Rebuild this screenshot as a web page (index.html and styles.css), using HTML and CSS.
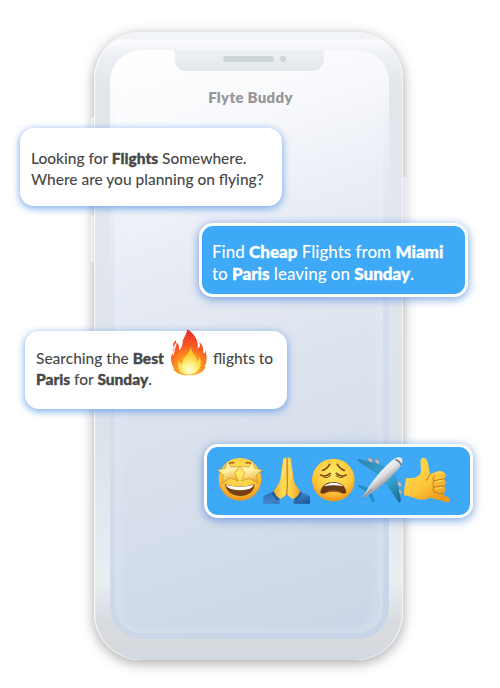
FILE: index.html
```html
<!DOCTYPE html>
<html lang="en">
<head>
<meta charset="utf-8">
<title>Flyte Buddy</title>
<link rel="stylesheet" href="styles.css">
</head>
<body>
<main class="stage">
  <div class="phone">
    <i class="key key-mute"></i><i class="key key-volume"></i><i class="key key-power"></i>
    <div class="screen">
      <div class="inset"></div>
      <svg class="notch" viewBox="0 0 157 21"><defs><linearGradient id="ng" x2="0" y2="1"><stop stop-color="#eef1f4"/><stop offset="1" stop-color="#e2e7eb"/></linearGradient></defs><path fill="url(#ng)" d="M0 0H157Q153 0 153 5V7C153 15 149 21 140 21H15C7 21 4 15 4 7V5Q4 0 0 0Z"/><rect x="52" y="6" width="51" height="6" rx="3" fill="#cfd6da"/><circle cx="112" cy="9" r="3" fill="#cfd6da"/></svg>
      <h1 class="title">Flyte Buddy</h1>
    </div>
  </div>
  <section class="chat">
    <div class="bubble received first">
      <p class="l1">Looking for <b>Flights</b> Somewhere.</p>
      <p class="l2">Where are you planning on flying?</p>
    </div>
    <div class="bubble sent second">
      <p class="l3">Find <b>Cheap</b> Flights from <b>Miami</b></p>
      <p class="l4">to <b>Paris</b> leaving on <b>Sunday</b>.</p>
    </div>
    <div class="bubble received third">
      <p class="l5"><span>Searching the <b>Best</b></span>
        <svg class="fire" viewBox="80 22 114 146"><defs><radialGradient id="fg" gradientUnits="userSpaceOnUse" cx="137" cy="143" r="108"><stop stop-color="#ffcf2b"/><stop offset=".32" stop-color="#ff9b20"/><stop offset=".62" stop-color="#fa5b24"/><stop offset="1" stop-color="#e93129"/></radialGradient><radialGradient id="fi" gradientUnits="userSpaceOnUse" cx="138" cy="147" r="47"><stop stop-color="#fffdd9"/><stop offset=".4" stop-color="#fff28a"/><stop offset="1" stop-color="#ffc823"/></radialGradient></defs><path fill="url(#fg)" d="M132 26C151 38 166 56 163 83C172 81 171 72 168 65C182 75 178 89 181 98C185 99 186 93 186 89C192 110 191 126 183 139L187 138C181 153 163 164 137 164C112 164 95 155 89 144L94 146C83 131 80 113 87 98L91 105C93 88 99 79 100 65C107 71 108 79 107 90C115 82 118 73 118 64C119 53 130 43 132 26Z"/><path fill="#f14b2d" d="M98 59Q88 65 90 77Q91 82 94 85Q90 74 98 67ZM90 83L87 88L91 91Z"/><path fill="url(#fi)" d="M143 78C141 96 163 103 160 122C166 120 168 112 168 107C181 132 166 162 137 162C112 162 99 146 106 117C108 127 113 130 118 129C114 112 137 103 143 78Z"/></svg>
        <span class="tail">flights to</span></p>
      <p class="l6"><b>Paris</b> for <b>Sunday</b>.</p>
    </div>
    <div class="bubble sent fourth">
      <svg class="emoji" viewBox="62 60 141 144" aria-label="star-struck"><defs><radialGradient id="face" cx=".5" cy=".35" r=".68"><stop stop-color="#ffec66"/><stop offset=".65" stop-color="#ffc73a"/><stop offset="1" stop-color="#ee8c17"/></radialGradient><linearGradient id="star" x2=".3" y2="1"><stop stop-color="#fff7b9"/><stop offset=".55" stop-color="#ffefa0"/><stop offset="1" stop-color="#edb039"/></linearGradient></defs><circle cx="134" cy="130" r="64" fill="url(#face)"/><path d="M96 88Q103 77 117 81M151 81Q165 77 172 88" fill="none" stroke="#8c4d12" stroke-width="4"/><path fill="#764012" d="M88 145Q132 158 178 145Q175 178 134 181Q95 177 88 145Z"/><path fill="#fff" d="M91 147Q133 157 175 147Q172 162 134 163Q97 162 91 147Z"/><path id="s" fill="url(#star)" stroke="#bd7819" stroke-width="1.5" stroke-linejoin="round" d="M96 74L107 93L133 91L118 111L129 135L104 127L80 142L84 116L66 102L90 97Z"/><path fill="url(#star)" stroke="#bd7819" stroke-width="1.5" stroke-linejoin="round" d="M172 74L161 93L134 91L149 111L138 135L163 127L187 142L184 116L202 102L178 97Z"/></svg>
      <svg class="emoji" viewBox="203 60 141 144" aria-label="folded hands"><defs><linearGradient id="pray"><stop stop-color="#f6ad24"/><stop offset=".35" stop-color="#ffda59"/><stop offset=".65" stop-color="#ffd04a"/><stop offset="1" stop-color="#efa11f"/></linearGradient><linearGradient id="cuff" x2="1" y2="1"><stop stop-color="#286bb2"/><stop offset=".5" stop-color="#4384c8"/><stop offset="1" stop-color="#195494"/></linearGradient></defs><path fill="url(#cuff)" d="M204 180L237 165L253 187V203H204ZM344 180L312 164L295 187V203H344Z"/><path fill="url(#pray)" d="M274 68C269 61 264 66 263 73L257 115Q257 131 250 144L235 166Q238 184 252 190Q269 181 274 173Q280 183 296 190Q311 183 315 166L300 146Q294 132 293 115L287 72C286 64 279 61 274 68Z"/><path d="M275 67L276 150L274 178" fill="none" stroke="#b86c19" stroke-width="3"/><path d="M272 73L264 123M280 73L287 123" fill="none" stroke="#ffe478" stroke-width="3"/><path fill="#1c5ea5" d="M235 166L230 174L244 194L254 189Q241 181 235 166ZM315 166L320 174L305 194L295 189Q309 181 315 166Z"/></svg>
      <svg class="emoji" viewBox="345 60 141 144" aria-label="weary"><circle cx="415" cy="132" r="64" fill="url(#face)"/><g fill="none" stroke="#7b4716" stroke-width="5" stroke-linecap="round"><path d="M383 103Q396 99 404 85M448 103Q435 99 427 85"/><path d="M377 117Q391 125 406 112M453 117Q439 125 424 112"/><path d="M386 124Q397 128 407 119M444 124Q433 128 423 119" stroke-width="3"/></g><path fill="#693a13" d="M376 170C378 147 396 138 416 138C436 138 452 148 454 170Q446 175 437 170Q416 160 394 170Q383 176 376 170Z"/><path fill="#fff" d="M386 151Q399 140 416 140Q434 140 445 151Q415 145 386 151Z"/><path fill="#a96226" d="M387 172Q416 154 445 172Q416 164 387 172Z"/></svg>
      <svg class="emoji" viewBox="66 60 141 144" aria-label="airplane"><defs><linearGradient id="body" x1=".35" y1=".3" x2=".62" y2=".65"><stop stop-color="#fff"/><stop offset=".5" stop-color="#dddfe2"/><stop offset="1" stop-color="#83878e"/></linearGradient><linearGradient id="wing" x2="1" y2="1"><stop stop-color="#2e83ac"/><stop offset=".6" stop-color="#37a7d7"/><stop offset="1" stop-color="#17658d"/></linearGradient></defs><g fill="#b8bec5" stroke="#727c86" stroke-width="2"><rect x="98" y="67" width="17" height="11" rx="5" transform="rotate(45 106 72)"/><rect x="119" y="71" width="17" height="11" rx="5" transform="rotate(45 127 76)"/><rect x="184" y="139" width="18" height="11" rx="5" transform="rotate(45 193 145)"/><rect x="184" y="161" width="18" height="11" rx="5" transform="rotate(45 193 167)"/></g><path fill="url(#wing)" d="M66 70L73 69L151 91L184 123L198 193L193 201L153 143L125 113L73 79Z"/><path fill="#218fc5" d="M67 150Q73 144 80 149L105 157L120 196Q117 203 111 197L99 172Z"/><path fill="url(#body)" d="M78 190L103 150Q135 104 172 73Q190 59 200 67Q208 77 193 96Q160 133 121 164Z"/><path d="M181 71Q194 74 198 87" fill="none" stroke="#606872" stroke-width="4"/><path d="M78 190L111 159" stroke="#727a82" stroke-width="3"/></svg>
      <svg class="emoji" viewBox="207 60 141 144" aria-label="call me hand"><defs><linearGradient id="hand" x2=".7" y2="1"><stop stop-color="#ffda50"/><stop offset=".6" stop-color="#ffc83c"/><stop offset="1" stop-color="#e99a21"/></linearGradient></defs><path fill="url(#hand)" d="M208 178C205 163 211 145 213 126Q237 129 251 119C264 110 254 86 257 73C260 62 272 64 276 73C282 88 281 101 285 114L311 105Q326 103 331 114Q335 124 327 129Q334 135 331 145L327 151Q335 158 328 170L323 175L340 184Q347 190 342 197Q337 201 325 196L284 185Q265 195 244 188Q225 181 208 178Z"/><path d="M284 115Q278 124 275 133M328 128L297 135M327 150L297 153M323 174L298 169M298 120Q290 129 296 137Q288 145 297 153Q289 161 298 169" fill="none" stroke="#c77b19" stroke-width="3" stroke-linecap="round"/><path d="M302 113Q315 105 325 113M303 137L323 133M302 157L322 155" fill="none" stroke="#ffe16b" stroke-width="3"/></svg>
    </div>
  </section>
</main>
</body>
</html>
```
FILE: styles.css
```css
* { box-sizing: border-box; }
body { margin: 0; background: #fff; font-family: Lato, "Liberation Sans", sans-serif; }
.stage { display: grid; width: 500px; height: 688px; overflow: hidden; }
.phone, .chat { grid-area: 1 / 1; }
.phone {
  position: relative;
  width: 309px; height: 628px; margin: 32px 0 0 94px; padding: 18px 14px 21px 16px;
  border-radius: 47px;
  background: linear-gradient(#f2f4f7 0, #f2f4f7 7px, #fcfcfe 9px, #edf0f4 22px, #e1e6ea 58px, #e4e8ee 130px, #dce2e9 400px, #e9eef1 548px, #d8dce1 590px, #d8dade 610px, #d4d9e2 625px, #cbd3dc 628px);
  box-shadow: inset 1px 0 1px #f8fafb, inset -1px 0 1px #f5f7f9, 0 3px 13px rgba(0,0,0,.35);
}
.key { position: absolute; width: 3px; background: #e5e9ed; border-left: 1px solid #f2f4f5; }
.key-mute { left: -3px; top: 85px; height: 69px; border-radius: 2px 0 0 2px; }
.key-volume { left: -3px; top: 183px; height: 48px; border-radius: 2px 0 0 2px; }
.key-power { right: -4px; top: 145px; height: 86px; width: 4px; border-radius: 0 2px 2px 0; border-left: 0; border-right: 1px solid #f2f4f5; }
.screen { position: relative; height: 589px; border-radius: 32px; background: linear-gradient(162deg, #fff 0%, #f8f9fc 16%, #e9edf5 32%, #dde3ee 55%, #d4ddea 76%, #c9d5e7 100%); overflow: hidden; }
.inset { position: absolute; inset: 0; border: solid rgba(190,207,232,.24); border-width: 0 6px 6px 5px; border-radius: 32px; box-shadow: inset -9px -5px 7px -2px rgba(240,245,255,.22), inset 9px 0 6px -2px rgba(240,245,255,.18); mask-image: linear-gradient(transparent 5%, #000 45%); }
.notch { position: relative; display: block; width: 157px; height: 21px; margin-left: 61px; }
.title { position: relative; margin: 16px 0 0; padding-left: 2px; text-align: center; font-size: 15px; line-height: 20px; font-weight: 800; color: #979797; letter-spacing: .3px; }
.chat { position: relative; display: flex; flex-direction: column; align-items: flex-start; padding-top: 128px; }
.bubble { border-radius: 14px; }
.bubble p { margin: 0; white-space: nowrap; }
.bubble b { font-weight: 900; -webkit-text-stroke: .35px currentColor; }
.received { width: 262px; height: 78px; background: #fff; color: #484848; font-size: 15.5px; line-height: 21px; font-weight: 500; box-shadow: 0 2px 7px 1px rgba(76,143,230,.67); }
.sent { width: 269px; height: 74px; border: 3px solid #fff; background: #3da9f7; color: #fff; font-size: 17px; line-height: 22px; font-weight: 500; box-shadow: 0 2px 8px 1px rgba(76,130,215,.65); }
.first { margin-left: 20px; padding: 20px 0 0 11px; }
.second { margin: 16.5px 0 0 199px; padding: 15px 0 0 10px; }
.third { margin: 34.5px 0 0 25px; padding: 17px 0 0 11px; }
.fourth { display: flex; margin: 34.5px 0 0 204px; padding: 9px 0 0 8.7px; }
.l5 { display: flex; }
.fire { width: 38px; height: 48.7px; margin: -20.5px 0 -30px 6px; flex: none; }
.tail { margin-left: 5px; }
.emoji { width: 47px; height: 48px; flex: none; }
```
